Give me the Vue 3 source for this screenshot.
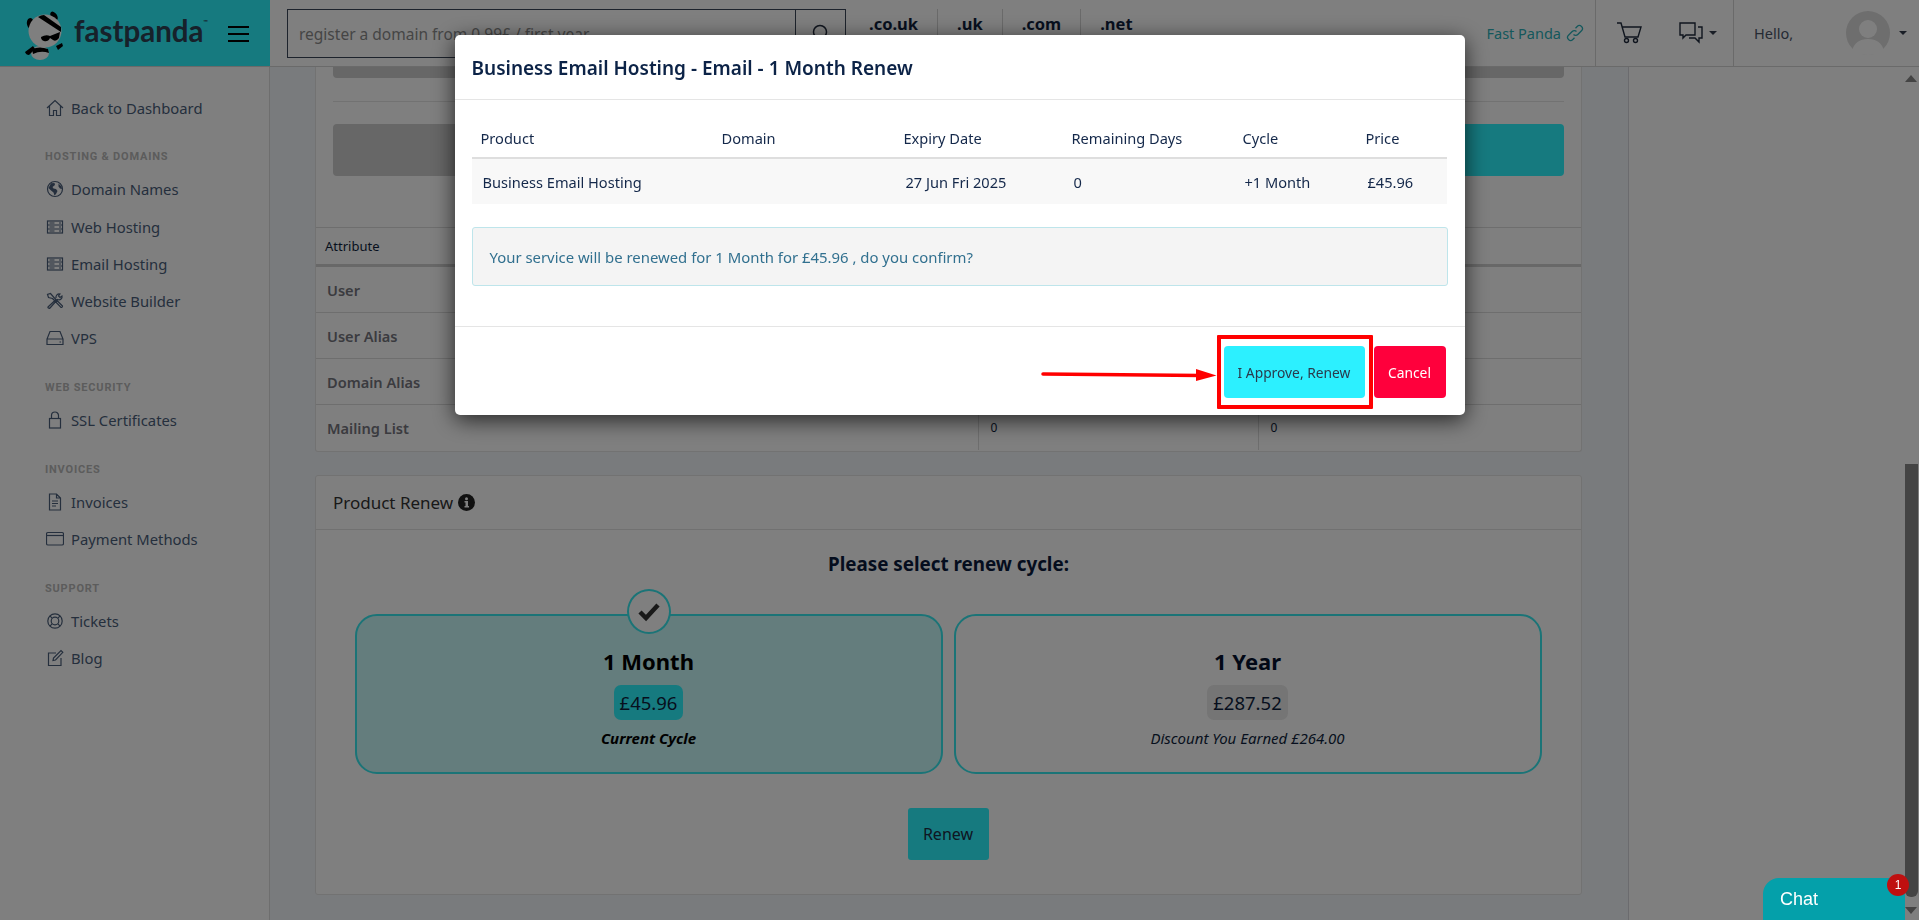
<script setup>
const icons = {
  home: '<path d="M1 9 9 1.500 17 9M3.500 7v9.500h4v-5h3v5h4V7"/>',
  globe: '<circle cx="9" cy="9" r="7.500"/><path fill="currentColor" stroke="none" d="M5 3.200 8.500 3 9 5 6.500 7l1 1.500 2.500.5 1.500 2-1.500 3-1.500 1.500-1-3-2.500-2L2.500 8zM12.500 3.500 15.500 6.500 16 9l-2-.5-1.500-2z"/>',
  server: '<rect x="1.500" y="3" width="15" height="12"/><path d="M1.500 7h15M1.500 11h15M3.500 5h5M3.500 9h5M3.500 13h5M13 5h2M13 9h2M13 13h2"/>',
  tools: '<path d="M6.500 6.500 15 15.500a1.400 1.400 0 0 0 1.500-1.500L8 5.500 4.500 1.500 1.500 2.500l1 3zM2 15l8-7.500M10 6c-.5-2.500 1.500-4.500 4-4L12.500 4l1.500 1.500 2-1.500c.5 2.500-1.500 4.500-4.500 3.500L4 16c-1 1-2.500-.5-2-1"/>',
  hdd: '<path d="M4 2.500h10l3 7.500v5.500H1V10zM1 10h16M13.500 13h1.500"/>',
  lock: '<rect x="3.500" y="7.500" width="11" height="9.500"/><path d="M5.500 7.500V4.500a3.500 3.500 0 0 1 7 0v3"/>',
  file: '<path d="M3.500 1h7l4 4v12h-11zM10.500 1v4h4M6 8h6M6 10.500h6M6 13h4"/>',
  card: '<rect x="0.500" y="2.500" width="17" height="12.500" rx="1.500"/><path d="M0.500 5.500h17"/>',
  ring: '<circle cx="9" cy="9" r="7.200"/><circle cx="9" cy="9" r="3.800"/><path d="M3.900 3.900l2.400 2.400M14.100 3.900l-2.400 2.400M3.900 14.100l2.400-2.400M14.100 14.100l-2.400-2.400"/>',
  pencil: '<path d="M10 4H2.500v12.500h12.500V9M7 11.500l.5-2.500L15 1.500l1.800 1.800L9.500 11z"/>'
}

const menu = [
  { items: [{ label: 'Back to Dashboard', icon: 'home' }] },
  {
    title: 'HOSTING & DOMAINS',
    items: [
      { label: 'Domain Names', icon: 'globe' },
      { label: 'Web Hosting', icon: 'server' },
      { label: 'Email Hosting', icon: 'server' },
      { label: 'Website Builder', icon: 'tools' },
      { label: 'VPS', icon: 'hdd' }
    ]
  },
  { title: 'WEB SECURITY', items: [{ label: 'SSL Certificates', icon: 'lock' }] },
  {
    title: 'INVOICES',
    items: [
      { label: 'Invoices', icon: 'file' },
      { label: 'Payment Methods', icon: 'card' }
    ]
  },
  {
    title: 'SUPPORT',
    items: [
      { label: 'Tickets', icon: 'ring' },
      { label: 'Blog', icon: 'pencil' }
    ]
  }
]

const tlds = ['.co.uk', '.uk', '.com', '.net']
// only the last row's values show from behind the modal
const attributes = [
  { name: 'User', value: '' },
  { name: 'User Alias', value: '' },
  { name: 'Domain Alias', value: '' },
  { name: 'Mailing List', value: '0' }
]
</script>

<template>
  <div class="page">
    <header class="topbar">
      <div class="logo">
        <svg class="panda" width="50" height="50" viewBox="0 0 50 50">
          <ellipse cx="9" cy="14" rx="4" ry="6" fill="#000" transform="rotate(-15 9 14)" />
          <ellipse cx="32" cy="6" rx="3" ry="5" fill="#000" transform="rotate(-35 32 6)" />
          <ellipse cx="18" cy="43" rx="9" ry="7" fill="#fff" />
          <path d="M10 39q8-3 16 0l1 4q-8-3-16 1z" fill="#000" />
          <circle cx="23" cy="21" r="16.500" fill="#fff" />
          <path d="M16 7q3-2 6-2l17 12 0 5z" fill="#000" />
          <path d="M19 27q5-3 9-1l10-4-1 6q-3 4-6 2l-3-2q-2 4-6 3q-3-1-3-4z" fill="#000" />
          <path d="M3 42l8-6 2 3-6 6q-3 0-4-3zM34 36l6-3 1 3-5 4z" fill="#000" />
        </svg>
        <span class="brand">fastpanda<sup>™</sup></span>
        <div class="burger"><i></i><i></i><i></i></div>
      </div>
      <div class="search">
        <div class="search-input">register a domain from 0.99£ / first year</div>
        <div class="search-btn">
          <svg width="20" height="20" viewBox="0 0 20 20" fill="none" stroke="#212b3c" stroke-width="1.500">
            <circle cx="9" cy="9" r="6.500" />
            <path d="M14 14l5 5" />
          </svg>
        </div>
      </div>
      <div class="tlds">
        <span v-for="t in tlds" :key="t" class="tld">{{ t }}</span>
      </div>
      <a class="site-link">
        Fast Panda
        <svg width="18" height="18" viewBox="0 0 18 18" fill="none" stroke="currentColor" stroke-width="1.300">
          <path d="M7.500 10.500a3 3 0 0 0 4.300 0l3.700-3.700a3 3 0 0 0-4.300-4.300L9.500 4.200" />
          <path d="M10.500 7.500a3 3 0 0 0-4.300 0l-3.700 3.700a3 3 0 0 0 4.300 4.300l1.700-1.700" />
        </svg>
      </a>
      <div class="tools">
        <svg width="25" height="22" viewBox="0 0 25 22" fill="none" stroke="#1f2a3c" stroke-width="1.400">
          <path d="M0 1h4l4 14h13L24 5H5.500" />
          <circle cx="9.500" cy="18.500" r="2" />
          <circle cx="18.500" cy="18.500" r="2" />
        </svg>
        <div class="chat-icon">
          <svg width="25" height="22" viewBox="0 0 25 22" fill="none" stroke="#1f2a3c" stroke-width="1.400">
            <path d="M1 1h15v12H7l-3 3v-3H1zM19 5h4v11h-3v4l-4-4h-6" />
          </svg>
          <b class="caret"></b>
        </div>
      </div>
      <div class="user">
        <span class="hello">Hello,</span>
        <div class="avatar">
          <svg width="44" height="44" viewBox="0 0 44 44">
            <circle cx="22" cy="22" r="22" fill="#dcdcdc" />
            <circle cx="22" cy="18" r="9" fill="#fff" />
            <path d="M6 40q3-12 16-12t16 12q-7 4-16 4t-16-4z" fill="#fff" />
          </svg>
          <b class="caret"></b>
        </div>
      </div>
    </header>

    <div class="layout">
      <aside class="sidebar">
        <section v-for="(group, i) in menu" :key="i" class="group">
          <h6 v-if="group.title">{{ group.title }}</h6>
          <a v-for="item in group.items" :key="item.label" class="menu-item">
            <svg width="18" height="18" viewBox="0 0 18 18" fill="none" stroke="currentColor" stroke-width="1.200" v-html="icons[item.icon]"></svg>
            {{ item.label }}
          </a>
        </section>
      </aside>

      <main class="main">
        <div class="card details">
          <div class="details-top">
            <div class="grey-strip"></div>
            <hr />
            <div class="action-row">
              <div class="action grey"></div>
              <div class="action teal"></div>
            </div>
          </div>
          <table class="attr">
            <thead>
              <tr><th>Attribute</th><th></th><th></th></tr>
            </thead>
            <tbody>
              <tr v-for="a in attributes" :key="a.name">
                <td class="name">{{ a.name }}</td>
                <td>{{ a.value }}</td>
                <td>{{ a.value }}</td>
              </tr>
            </tbody>
          </table>
        </div>

        <div class="card renew">
          <div class="renew-head">
            Product Renew
            <svg width="17" height="17" viewBox="0 0 17 17">
              <circle cx="8.500" cy="8.500" r="8.500" fill="#222" />
              <circle cx="8.500" cy="4.800" r="1.500" fill="#fff" />
              <path d="M6.500 7h3.500v5h1v1.500H6.500V12h1V8.500h-1z" fill="#fff" />
            </svg>
          </div>
          <h3>Please select renew cycle:</h3>
          <div class="cycles">
            <div class="cycle active">
              <span class="check">
                <svg width="24" height="20" viewBox="0 0 24 20" fill="none" stroke="#333" stroke-width="4.500">
                  <path d="M3 10l6 6L21 3" />
                </svg>
              </span>
              <strong>1 Month</strong>
              <span class="price">£45.96</span>
              <em class="bold">Current Cycle</em>
            </div>
            <div class="cycle">
              <strong>1 Year</strong>
              <span class="price">£287.52</span>
              <em>Discount You Earned £264.00</em>
            </div>
          </div>
          <button class="renew-btn">Renew</button>
        </div>
      </main>

      <aside class="side-panel"></aside>
    </div>

    <div class="overlay">
      <div class="modal">
        <div class="modal-head">Business Email Hosting - Email - 1 Month Renew</div>
        <div class="modal-body">
          <table class="order">
            <thead>
              <tr>
                <th class="c1">Product</th>
                <th class="c2">Domain</th>
                <th class="c3">Expiry Date</th>
                <th class="c4">Remaining Days</th>
                <th class="c5">Cycle</th>
                <th>Price</th>
              </tr>
            </thead>
            <tbody>
              <tr>
                <td>Business Email Hosting</td>
                <td></td>
                <td>27 Jun Fri 2025</td>
                <td>0</td>
                <td>+1 Month</td>
                <td>£45.96</td>
              </tr>
            </tbody>
          </table>
          <div class="notice">Your service will be renewed for 1 Month for £45.96 , do you confirm?</div>
        </div>
        <div class="modal-foot">
          <svg class="arrow" width="176" height="14" viewBox="0 0 176 14">
            <path d="M2 6 160 7.500" stroke="#f00" stroke-width="3.500" stroke-linecap="round" fill="none" />
            <path d="M155 1 175.500 7.500 155 13z" fill="#f00" />
          </svg>
          <span class="mark"></span>
          <button class="approve">I Approve, Renew</button>
          <button class="cancel">Cancel</button>
        </div>
      </div>
    </div>

    <div class="scrollbar">
      <b class="up"></b>
      <i class="thumb"></i>
      <b class="down"></b>
    </div>

    <div class="chat">
      Chat
      <span class="badge">1</span>
    </div>
  </div>
</template>

<style scoped>
.page {
  height: 920px;
  overflow: hidden;
  display: flex;
  flex-direction: column;
  background: #fff;
  font-family: "Noto Sans", "Open Sans", sans-serif;
  font-size: 14px;
  color: #0f1f3d;
}
.topbar {
  height: 67px;
  flex: none;
  display: flex;
  align-items: stretch;
  border-bottom: 1px solid #d5d5d5;
  box-sizing: border-box;
}
.logo {
  width: 270px;
  flex: none;
  height: 66px;
  background: #2cf4ff;
  position: relative;
  display: flex;
  align-items: center;
  box-sizing: border-box;
  padding-left: 22px;
}
.panda {
  margin-top: 4px;
}
.brand {
  font-family: Lato, sans-serif;
  font-weight: 700;
  font-size: 29.500px;
  color: #2e4254;
  margin-left: 2px;
  margin-top: -6px;
}
.brand sup {
  font-size: 6px;
  vertical-align: 18px;
  line-height: 0;
}
.burger {
  position: absolute;
  left: 228px;
  top: 26px;
  width: 21px;
  display: flex;
  flex-direction: column;
  gap: 5px;
}
.burger i {
  height: 2px;
  background: #000;
}
.search {
  margin: 9px 0 0 17px;
  height: 49px;
  display: flex;
  width: 559px;
  border: 1px solid #3a4658;
  box-sizing: border-box;
}
.search-input {
  flex: 1;
  padding: 13px 11px 0;
  font-size: 15.500px;
  color: #8b8b8b;
  white-space: nowrap;
}
.search-btn {
  width: 50px;
  border-left: 1px solid #3a4658;
  display: flex;
  justify-content: center;
  padding-top: 13px;
  box-sizing: border-box;
}
.tlds {
  display: flex;
  margin-left: 4px;
  height: 49px;
  margin-top: 9px;
}
.tld {
  font-size: 16.500px;
  font-weight: 700;
  color: #0f1f3d;
  padding: 3px 19px 0;
  border-right: 1px solid #d4d4d4;
  height: 40px;
  line-height: 24px;
  box-sizing: border-box;
}
.tld:last-child {
  border-right: 0;
}
.site-link {
  margin-left: auto;
  display: flex;
  align-items: center;
  gap: 5px;
  color: #2ab0b8;
  font-size: 14.500px;
  padding-right: 11px;
}
.tools {
  width: 139px;
  box-sizing: border-box;
  border-left: 1px solid #d5d5d5;
  border-right: 1px solid #d5d5d5;
  display: flex;
  align-items: center;
  padding-left: 21px;
  gap: 37px;
}
.chat-icon {
  display: flex;
  align-items: center;
  gap: 5px;
}
.caret {
  border-top: 4px solid #333c4c;
  border-left: 4px solid transparent;
  border-right: 4px solid transparent;
}
.user {
  width: 185px;
  display: flex;
  align-items: center;
  box-sizing: border-box;
  padding-left: 20px;
}
.hello {
  color: #4a5568;
  font-size: 14.500px;
}
.avatar {
  margin-left: auto;
  margin-right: 12px;
  display: flex;
  align-items: center;
  gap: 9px;
}
.layout {
  flex: 1;
  display: flex;
  min-height: 0;
}
.sidebar {
  width: 270px;
  flex: none;
  box-sizing: border-box;
  border-right: 1px solid #ddd;
  padding-top: 22px;
}
.group {
  margin-bottom: 23.200px;
}
.group h6 {
  margin: 0 0 5.500px;
  padding-left: 45px;
  height: 16px;
  line-height: 16px;
  font-family: Roboto, sans-serif;
  font-size: 11px;
  font-weight: 700;
  letter-spacing: 0.8px;
  color: #b8b8b8;
}
.menu-item {
  height: 37.200px;
  display: flex;
  align-items: center;
  gap: 7px;
  padding-left: 46px;
  font-size: 14.800px;
  color: #4a5e7a;
  white-space: nowrap;
}
.main {
  flex: 1;
  min-width: 0;
  background: #f3f6fb;
  padding: 0 46px 0 45px;
}
.card {
  background: #fff;
  border: 1px solid #e4e4e4;
  box-sizing: border-box;
  border-radius: 3px;
}
.details {
  height: 385px;
  border-top: 0;
  border-radius: 0 0 3px 3px;
}
.details-top {
  padding: 0 17px;
  height: 160px;
}
.grey-strip {
  height: 11px;
  background: #cecece;
  border-radius: 0 0 4px 4px;
}
.details-top hr {
  border: 0;
  border-top: 1px solid #e4e4e4;
  margin: 23px 0 22px;
}
.action-row {
  display: grid;
  grid-template-columns: 1fr 1fr;
  gap: 16px;
}
.action {
  height: 52px;
  border-radius: 4px;
}
.action.grey {
  background: #cecece;
}
.action.teal {
  background: #2cf4ff;
}
.attr {
  width: 100%;
  border-collapse: collapse;
  table-layout: fixed;
  border-top: 1px solid #dcdcdc;
}
.attr th {
  height: 38px;
  padding: 0 9px;
  text-align: left;
  font-size: 13px;
  font-weight: 400;
  border-bottom: 3px solid #d0d0d0;
  box-sizing: border-box;
}
.attr th:first-child {
  width: 662px;
}
.attr th:nth-child(2) {
  width: 280px;
}
.attr td {
  height: 45px;
  padding: 0 12px;
  font-size: 12px;
  border-bottom: 1px solid #dcdcdc;
  border-left: 1px solid #dcdcdc;
}
.attr tr:last-child td {
  border-bottom: 0;
}
.attr td.name {
  border-left: 0;
  padding-left: 11px;
  font-size: 14.600px;
  font-weight: 600;
  color: #76767e;
}
.renew {
  margin-top: 23px;
  height: 420px;
  display: flex;
  flex-direction: column;
  align-items: center;
}
.renew-head {
  width: 100%;
  height: 54px;
  box-sizing: border-box;
  border-bottom: 1px solid #e2e2e2;
  display: flex;
  align-items: center;
  gap: 5px;
  padding-left: 17px;
  font-size: 17px;
  color: #333;
}
.renew h3 {
  margin: 22px 0 0;
  font-size: 18.800px;
  font-weight: 700;
  line-height: 24px;
  color: #0a1a3c;
}
.cycles {
  margin: 38px 1px 0 0;
  display: grid;
  grid-template-columns: 588px 588px;
  gap: 11px;
}
.cycle {
  height: 160px;
  box-sizing: border-box;
  border: 2px solid #36e8ee;
  border-radius: 22px;
  position: relative;
  display: flex;
  flex-direction: column;
  align-items: center;
  padding-top: 30px;
}
.cycle.active {
  background: #c8fafa;
}
.check {
  position: absolute;
  left: 50%;
  top: -27px;
  width: 44px;
  height: 45px;
  margin-left: -22px;
  box-sizing: border-box;
  border: 2px solid #36e8ee;
  border-radius: 50%;
  background: #fff;
  display: flex;
  align-items: center;
  justify-content: center;
}
.cycle strong {
  font-size: 22px;
  line-height: 30px;
  font-weight: 700;
  color: #05112c;
}
.cycle.active strong {
  color: #000;
}
.price {
  margin-top: 9px;
  padding: 0 6px;
  height: 35px;
  line-height: 35px;
  background: #eaeaea;
  border-radius: 7px;
  font-size: 18.500px;
}
.active .price {
  background: #2cf4ff;
}
.cycle em {
  margin-top: 8px;
  font-size: 15px;
}
.cycle em.bold {
  font-weight: 700;
  color: #000;
}
.renew-btn {
  margin: 34px 1px 0 0;
  width: 81px;
  height: 52px;
  border: 0;
  border-radius: 3px;
  background: #2cf4ff;
  font: inherit;
  font-size: 16px;
  color: #1d2c44;
}
.side-panel {
  width: 291px;
  flex: none;
  border-left: 1px solid #d6d6dc;
  box-sizing: border-box;
}
.overlay {
  position: fixed;
  inset: 0;
  background: rgba(0, 0, 0, 0.5);
  padding-top: 35px;
  display: flex;
  justify-content: center;
  align-items: flex-start;
}
.modal {
  width: 1010px;
  height: 380px;
  background: #fff;
  border-radius: 5px;
  box-shadow: 0 5px 22px rgba(0, 0, 0, 0.7);
  display: flex;
  flex-direction: column;
}
.modal-head {
  height: 65px;
  flex: none;
  box-sizing: border-box;
  border-bottom: 1px solid #e5e5e5;
  padding: 1px 0 0 17px;
  display: flex;
  align-items: center;
  font-size: 19px;
  font-weight: 600;
  color: #0c2347;
}
.modal-body {
  flex: 1;
  padding: 0 17px;
  box-sizing: border-box;
}
.order {
  width: 975px;
  margin-top: 18px;
  border-collapse: collapse;
  table-layout: fixed;
}
.order th {
  height: 40px;
  padding: 0 0 0 9px;
  box-sizing: border-box;
  text-align: left;
  font-size: 14.600px;
  font-weight: 400;
  color: #14284a;
  border-bottom: 2px solid #dedede;
}
.order .c1 { width: 241px; }
.order .c2 { width: 182px; }
.order .c3 { width: 168px; }
.order .c4 { width: 171px; }
.order .c5 { width: 123px; }
.order td {
  height: 45px;
  padding: 0 0 0 11px;
  background: #f8f8f8;
  font-size: 14.600px;
  color: #14284a;
  white-space: nowrap;
}
.notice {
  margin-top: 23px;
  height: 59px;
  box-sizing: border-box;
  border: 1px solid #bee5eb;
  border-radius: 3px;
  background: #f4f4f4;
  padding-left: 17px;
  display: flex;
  align-items: center;
  font-size: 14.900px;
  color: #31708f;
}
.modal-foot {
  height: 89px;
  flex: none;
  box-sizing: border-box;
  border-top: 1px solid #e5e5e5;
  position: relative;
  display: flex;
  justify-content: flex-end;
  gap: 9px;
  padding: 19px 19px 0 0;
}
.modal-foot button {
  height: 52px;
  border: 0;
  border-radius: 4px;
  font: inherit;
  font-size: 13.800px;
}
.approve {
  width: 141px;
  background: #2cf0ff;
  color: #2a3a4c;
}
.cancel {
  width: 72px;
  background: #ff003c;
  color: #fff;
}
.arrow {
  position: absolute;
  left: 586px;
  top: 41px;
}
.mark {
  position: absolute;
  left: 762px;
  top: 8px;
  width: 156px;
  height: 74px;
  box-sizing: border-box;
  border: 4px solid #f00;
  border-radius: 1px;
}
.scrollbar {
  position: fixed;
  right: 1px;
  top: 75px;
  bottom: 6px;
  width: 13px;
}
.scrollbar .up,
.scrollbar .down {
  position: absolute;
  left: 0;
  border-left: 6.500px solid transparent;
  border-right: 6.500px solid transparent;
}
.scrollbar .up {
  top: 0;
  border-bottom: 7px solid #444;
}
.scrollbar .down {
  bottom: 0;
  border-top: 7px solid #444;
}
.thumb {
  position: absolute;
  top: 389px;
  left: 0;
  width: 13px;
  height: 433px;
  background: #444;
  border-radius: 0 0 6px 6px;
}
.chat {
  position: fixed;
  left: 1763px;
  top: 878px;
  width: 142px;
  height: 42px;
  box-sizing: border-box;
  padding: 11px 0 0 17px;
  background: #04a0aa;
  border-radius: 16px 0 0 0;
  font-family: "Liberation Sans", Arial, sans-serif;
  font-size: 18px;
  color: #fff;
}
.badge {
  position: absolute;
  right: -4px;
  top: -4px;
  width: 22px;
  height: 22px;
  border-radius: 50%;
  background: #bf1010;
  font-size: 12px;
  line-height: 22px;
  text-align: center;
}
</style>
